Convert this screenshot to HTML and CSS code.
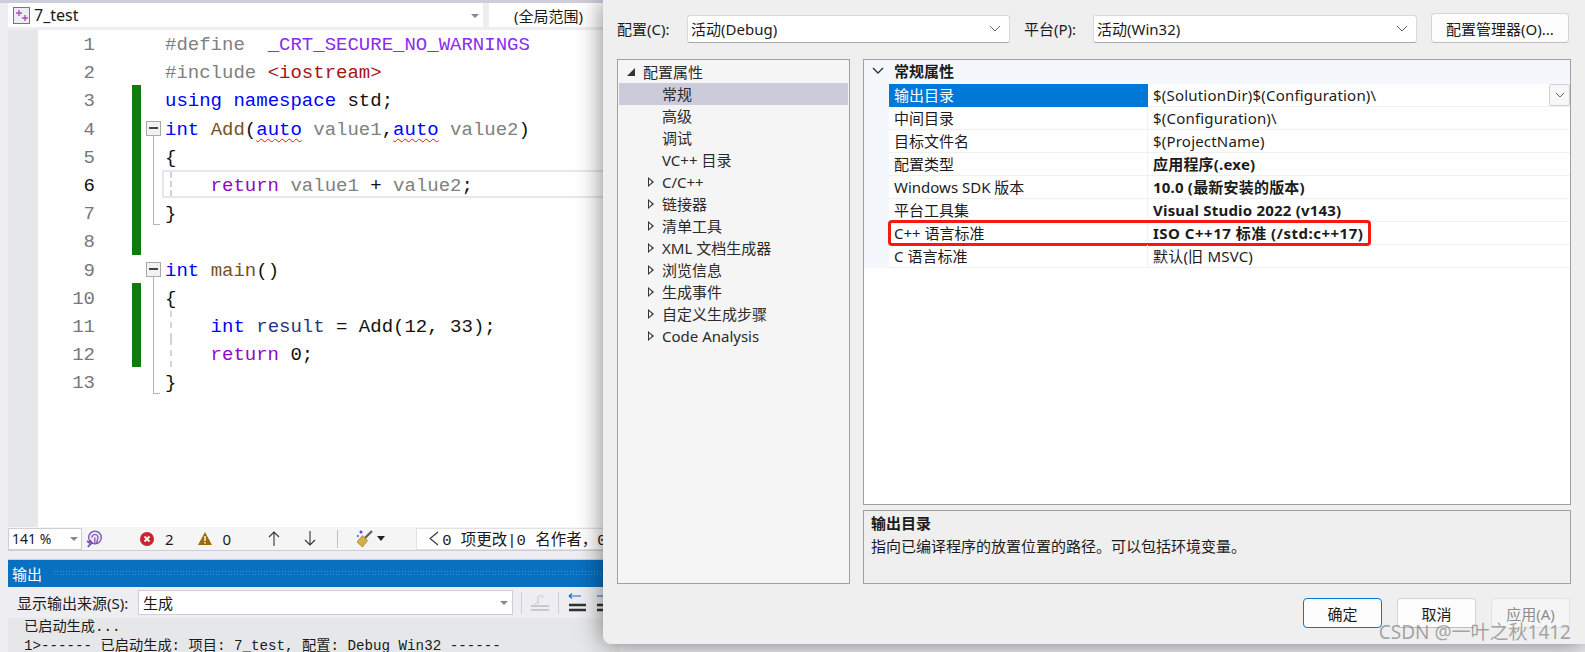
FILE: index.html
```html
<!DOCTYPE html>
<html lang="zh-CN">
<head>
<meta charset="utf-8">
<title>7_test</title>
<link rel="stylesheet" href="styles.css">
</head>
<body>
<main class="ide">
  <div class="nav">
    <div class="combo nav-file">
      <svg class="proj-icon" width="17" height="17" viewBox="0 0 17 17"><rect x=".5" y=".5" width="16" height="16" fill="#eeedf0" stroke="#77757a"/><path d="M3 6h6M6 3v6M9 11h6M12 8v6" stroke="#b24cc0" stroke-width="1.400" fill="none"/></svg>
      <span class="nav-name">7_test</span>
      <i class="tri"></i>
    </div>
    <div class="combo nav-scope">(全局范围)</div>
  </div>
  <div class="editor">
    <div class="gutter"></div>
    <div class="code">
      <div class="line"><span class="num">1</span><span class="chg"></span><span class="fold"></span><span class="txt"><span class="g">#define</span>  <span class="m">_CRT_SECURE_NO_WARNINGS</span></span></div>
      <div class="line"><span class="num">2</span><span class="chg"></span><span class="fold"></span><span class="txt"><span class="g">#include</span> <span class="s">&lt;iostream&gt;</span></span></div>
      <div class="line"><span class="num">3</span><span class="chg on"></span><span class="fold"></span><span class="txt"><span class="k">using</span> <span class="k">namespace</span> std;</span></div>
      <div class="line"><span class="num">4</span><span class="chg on"></span><span class="fold box"></span><span class="txt"><span class="k">int</span> <span class="f">Add</span>(<span class="k err">auto</span> <span class="g">value1</span>,<span class="k err">auto</span> <span class="g">value2</span>)</span></div>
      <div class="line"><span class="num">5</span><span class="chg on"></span><span class="fold bar"></span><span class="txt">{</span></div>
      <div class="line cur"><span class="num now">6</span><span class="chg on"></span><span class="fold bar"></span><span class="txt"><span class="dash"></span>    <span class="p">return</span> <span class="g">value1</span> + <span class="g">value2</span>;</span></div>
      <div class="line"><span class="num">7</span><span class="chg on"></span><span class="fold end"></span><span class="txt">}</span></div>
      <div class="line"><span class="num">8</span><span class="chg on"></span><span class="fold"></span><span class="txt"></span></div>
      <div class="line"><span class="num">9</span><span class="chg"></span><span class="fold box"></span><span class="txt"><span class="k">int</span> <span class="f">main</span>()</span></div>
      <div class="line"><span class="num">10</span><span class="chg on"></span><span class="fold bar"></span><span class="txt">{</span></div>
      <div class="line"><span class="num">11</span><span class="chg on"></span><span class="fold bar"></span><span class="txt"><span class="dash"></span>    <span class="k">int</span> <span class="v">result</span> = Add(12, 33);</span></div>
      <div class="line"><span class="num">12</span><span class="chg on"></span><span class="fold bar"></span><span class="txt"><span class="dash"></span>    <span class="p">return</span> 0;</span></div>
      <div class="line"><span class="num">13</span><span class="chg"></span><span class="fold end"></span><span class="txt">}</span></div>
    </div>
  </div>
  <div class="status">
    <div class="zoom-box"><span>141 %</span><i class="tri"></i></div>
    <svg class="st-icon" width="16" height="18" viewBox="0 0 16 18"><circle cx="9" cy="7.500" r="6.300" fill="#ece6f6" stroke="#7a52b0" stroke-width="1.300"/><path d="M6 7.500a3 3 0 1 1 6 0c0 2-1 3-1.500 6M8.800 7.500v6" fill="none" stroke="#7a52b0" stroke-width="1.200"/><path d="M1 11l2 1.500 1.500-1.500 1.500 2-2 1.500L2 17" fill="none" stroke="#7a52b0" stroke-width="1.800"/></svg>
    <span class="st-item st-err"><svg width="14" height="14" viewBox="0 0 14 14"><circle cx="7" cy="7" r="7" fill="#c8252c"/><path d="M4.500 4.500l5 5M9.500 4.500l-5 5" stroke="#fff" stroke-width="1.800"/></svg>2</span>
    <span class="st-item st-warn"><svg width="14" height="13" viewBox="0 0 14 13"><path d="M7 0l7 13H0z" fill="#9a6a0b"/><path d="M7 4v5M7 10v1.500" stroke="#fff" stroke-width="1.400"/></svg>0</span>
    <svg class="arrow-up" width="12" height="15" viewBox="0 0 12 15"><path d="M6 15V1M1 6l5-5 5 5" fill="none" stroke="#333" stroke-width="1.100"/></svg>
    <svg class="arrow-down" width="12" height="15" viewBox="0 0 12 15"><path d="M6 0v14M1 9l5 5 5-5" fill="none" stroke="#333" stroke-width="1.100"/></svg>
    <span class="st-sep"></span>
    <svg class="broom" width="17" height="18" viewBox="0 0 17 18"><path d="M16 1l-7 7" stroke="#6b6257" stroke-width="2.400"/><path d="M6.500 5.500l5 5-5 6.500L1 12z" fill="#d6ae4c" stroke="#a57f25" stroke-width=".8"/><circle cx="5" cy="2" r="1.500" fill="#3d56c8"/><circle cx="1.800" cy="6" r="1" fill="#3d56c8"/></svg>
    <i class="tri-dark"></i>
    <div class="codelens"><svg width="10" height="15" viewBox="0 0 10 15"><path d="M9 1L1 7.500 9 14" fill="none" stroke="#333" stroke-width="1.100"/></svg><span>0 项更改|0 名作者，0</span></div>
  </div>
  <section class="output">
    <div class="out-title"><span>输出</span><span class="dots"></span></div>
    <div class="out-bar">
      <label>显示输出来源(S):</label>
      <div class="combo out-src"><span>生成</span><i class="tri"></i></div>
      <span class="bar-sep"></span>
      <svg class="bar-icon" width="18" height="18" viewBox="0 0 18 18"><path d="M0 12h18M0 16h18" stroke="#c9c9cc" stroke-width="1.800"/><path d="M7 10V4a2.500 2.500 0 0 1 5 0M4 10l3-2.500" stroke="#c9c9cc" fill="none"/></svg>
      <span class="bar-sep"></span>
      <svg class="bar-icon" width="19" height="19" viewBox="0 0 19 19"><path d="M1 3h12M1 3l3-2.500M1 3l3 2.500" stroke="#1a6fc0" stroke-width="1.200" fill="none"/><path d="M1 12h17M1 17h17" stroke="#333" stroke-width="2.400"/></svg>
      <svg class="bar-icon" width="19" height="19" viewBox="0 0 19 19"><path d="M1 3h12M13 3L10 .5M13 3l-3 2.500" stroke="#1a6fc0" stroke-width="1.200" fill="none"/><path d="M1 12h17M1 17h17" stroke="#333" stroke-width="2.400"/></svg>
    </div>
    <div class="out-text">
      <div>已启动生成...</div>
      <div>1&gt;------ 已启动生成: 项目: 7_test, 配置: Debug Win32 ------</div>
    </div>
  </section>
</main>

<section class="dialog">
  <div class="cfg-row">
    <label class="cfg-label">配置(C):</label>
    <div class="select cfg-sel"><span>活动(Debug)</span><svg width="12" height="7" viewBox="0 0 12 7"><path d="M1 1l5 5 5-5" fill="none" stroke="#666"/></svg></div>
    <label class="plat-label">平台(P):</label>
    <div class="select plat-sel"><span>活动(Win32)</span><svg width="12" height="7" viewBox="0 0 12 7"><path d="M1 1l5 5 5-5" fill="none" stroke="#666"/></svg></div>
    <button class="btn mgr">配置管理器(O)...</button>
  </div>
  <div class="panes">
    <nav class="tree">
      <div class="node root"><i class="open"></i>配置属性</div>
      <div class="node sel">常规</div>
      <div class="node">高级</div>
      <div class="node">调试</div>
      <div class="node">VC++ 目录</div>
      <div class="node"><i class="closed"></i>C/C++</div>
      <div class="node"><i class="closed"></i>链接器</div>
      <div class="node"><i class="closed"></i>清单工具</div>
      <div class="node"><i class="closed"></i>XML 文档生成器</div>
      <div class="node"><i class="closed"></i>浏览信息</div>
      <div class="node"><i class="closed"></i>生成事件</div>
      <div class="node"><i class="closed"></i>自定义生成步骤</div>
      <div class="node"><i class="closed"></i>Code Analysis</div>
    </nav>
    <div class="right">
      <div class="grid">
        <div class="cat"><svg width="12" height="8" viewBox="0 0 12 8"><path d="M1 1l5 5 5-5" fill="none" stroke="#333" stroke-width="1.400"/></svg><b>常规属性</b></div>
        <div class="prop active"><span class="pk">输出目录</span><span class="pv">$(SolutionDir)$(Configuration)\</span><span class="drop"><svg width="10" height="6" viewBox="0 0 10 6"><path d="M1 1l4 4 4-4" fill="none" stroke="#666"/></svg></span></div>
        <div class="prop"><span class="pk">中间目录</span><span class="pv">$(Configuration)\</span></div>
        <div class="prop"><span class="pk">目标文件名</span><span class="pv">$(ProjectName)</span></div>
        <div class="prop"><span class="pk">配置类型</span><span class="pv bold">应用程序(.exe)</span></div>
        <div class="prop"><span class="pk">Windows SDK 版本</span><span class="pv bold">10.0 (最新安装的版本)</span></div>
        <div class="prop"><span class="pk">平台工具集</span><span class="pv bold">Visual Studio 2022 (v143)</span></div>
        <div class="prop marked"><span class="pk">C++ 语言标准</span><span class="pv bold">ISO C++17 标准 (/std:c++17)</span></div>
        <div class="prop"><span class="pk">C 语言标准</span><span class="pv">默认(旧 MSVC)</span></div>
      </div>
      <div class="desc">
        <b>输出目录</b>
        <p>指向已编译程序的放置位置的路径。可以包括环境变量。</p>
      </div>
    </div>
  </div>
  <div class="actions">
    <button class="btn ok">确定</button>
    <button class="btn">取消</button>
    <button class="btn off">应用(A)</button>
  </div>
</section>
<span class="wm">CSDN @一叶之秋1412</span>
</body>
</html>
```

FILE: styles.css
```css
*, *::before, *::after { box-sizing: border-box; }
html, body { margin: 0; height: 652px; overflow: hidden; }
body {
  position: relative;
  width: 1585px;
  background: #eeeef2;
  font-family: "Noto Sans", "Noto Sans CJK SC", sans-serif;
  color: #1a1a1a;
}
i { display: block; font-style: normal; }

/* IDE behind the dialog */
.ide { width: 620px; height: 652px; padding-left: 8px; display: flex; flex-direction: column; border-top: 3px solid #cccedb; overflow: hidden; }
.nav { display: flex; gap: 6px; height: 24px; flex: none; }
.combo { background: #fff; display: flex; align-items: center; position: relative; }
.nav-file { width: 475px; padding-left: 5px; }
.proj-icon { margin-right: 4px; flex: none; }
.nav-name { font-size: 16px; }
.nav-file .tri { position: absolute; right: 4px; top: 11px; }
.nav-scope { width: 130px; padding-left: 25px; font-size: 15px; white-space: nowrap; }
.tri { width: 0; height: 0; border-left: 4px solid transparent; border-right: 4px solid transparent; border-top: 4px solid #888; }

.editor { height: 497px; margin-top: 3px; display: flex; flex: none; background: #fff; }
.gutter { width: 30px; background: #e6e7e8; flex: none; }
.code { flex: 1; margin-top: -1px; font: 19px/28.2px "Liberation Mono", monospace; }
.line { display: flex; height: 28.2px; position: relative; }
.num { width: 57px; padding-top: 2px; text-align: right; color: #77787a; flex: none; }
.num.now { color: #111; }
.chg { width: 9px; margin-left: 37px; flex: none; }
.chg.on { background: #107c10; }
.fold { width: 15px; margin-left: 5px; flex: none; position: relative; }
.fold.bar::before, .fold.end::before { content: ""; position: absolute; left: 7px; top: 0; bottom: 0; width: 1px; background: #b4b4b4; }
.fold.end::before { bottom: 1px; }
.fold.end::after { content: ""; position: absolute; left: 7px; bottom: 1px; width: 7px; height: 1px; background: #b4b4b4; }
.fold.box { background: linear-gradient(#b4b4b4, #b4b4b4) 7px 22px / 1px 100% no-repeat; }
.fold.box::before { content: ""; position: absolute; left: 0; top: 7px; width: 15px; height: 15px; border: 1px solid #a9a9a9; background: #f2f2f2; }
.fold.box::after { content: ""; position: absolute; left: 3px; top: 13px; width: 9px; height: 2px; background: #444; }
.txt { padding: 2px 0 0 4px; flex: 1; position: relative; color: #111; white-space: pre; }
.dash { position: absolute; left: 9px; top: 0; bottom: 0; border-left: 2px dashed #d3d3d3; }
.line.cur .txt { border: 2px solid #e6e6f0; border-right: 0; margin-left: 1px; padding: 0 0 0 1px; }
.line.cur .dash { left: 6px; }
.g { color: #808080; }
.m { color: #8a2df0; }
.s { color: #a31515; }
.k { color: #0000ff; }
.f { color: #74531f; }
.p { color: #8f08c4; }
.v { color: #1f377f; }
.err { text-decoration: underline wavy #e51400 1px; text-underline-offset: 3px; }

.status { height: 24px; display: flex; align-items: center; flex: none; background: #f5f5f5; border-bottom: 1px solid #ccced8; font-size: 15px; }
.zoom-box { width: 74px; height: 22px; flex: none; background: #fff; border: 1px solid #ccced8; display: flex; align-items: center; justify-content: space-between; padding: 0 3px; font-size: 14px; }
.st-icon { margin-left: 4px; flex: none; }
.st-item { display: flex; align-items: center; gap: 11px; flex: none; }
.st-err { margin-left: 38px; }
.st-warn { margin-left: 24px; }
.arrow-up { margin-left: 37px; flex: none; }
.arrow-down { margin-left: 24px; flex: none; }
.st-sep { width: 1px; height: 18px; background: #c0c0c0; margin-left: 21px; flex: none; }
.broom { margin-left: 18px; flex: none; }
.tri-dark { width: 0; height: 0; border-left: 4px solid transparent; border-right: 4px solid transparent; border-top: 5px solid #222; margin-left: 4px; flex: none; }
.codelens { margin-left: 31px; width: 210px; height: 22px; background: #fff; display: flex; align-items: center; gap: 3px; padding-left: 12px; font: 15.5px "Liberation Mono", "Noto Sans CJK SC", monospace; white-space: pre; overflow: hidden; flex: none; border: 1px solid #e2e2e6; }

.output { margin-top: 8px; flex: 1; border-top: 1px solid #ccced8; display: flex; flex-direction: column; min-height: 0; }
.out-title { height: 27px; background: #0870c0; color: #fff; font-size: 15px; display: flex; align-items: center; padding-left: 4px; gap: 11px; flex: none; }
.dots { flex: 1; height: 7px; background: radial-gradient(circle, #3f93d2 1px, transparent 1px) 0 0 / 3px 3px; }
.out-bar { height: 31px; display: flex; align-items: center; padding-left: 9px; flex: none; font-size: 15px; }
.out-bar label { width: 121px; flex: none; white-space: nowrap; }
.out-src { width: 375px; height: 25px; flex: none; border: 1px solid #ccced8; padding: 0 4px; font-size: 15px; justify-content: space-between; margin-right: 8px; }
.bar-sep { width: 1px; height: 22px; background: #ccced8; margin-right: 9px; flex: none; }
.bar-icon { margin-right: 9px; flex: none; }
.out-text { flex: 1; min-height: 0; background: #e6e7e8; font: 14.2px/19px "Liberation Mono", "Noto Sans CJK SC", monospace; padding-left: 16px; overflow: hidden; }
.out-text div { white-space: pre; }

/* Property dialog: a window floating above the IDE */
.dialog {
  position: absolute; left: 603px; top: 0; width: 982px; height: 644px;
  background: #efefef; border-radius: 0 0 0 8px;
  box-shadow: 0 0 26px rgba(0,0,0,.5);
  font-size: 15px; color: #1b1b1b;
  padding: 13px 15px 0 14px;
  display: flex; flex-direction: column;
}
.cfg-row { display: flex; align-items: center; height: 30px; flex: none; }
.cfg-label { width: 70px; flex: none; white-space: nowrap; }
.select { height: 28px; flex: none; background: #fff; border: 1px solid #d8d8d8; border-bottom-color: #a8a8a8; border-radius: 3px; display: flex; align-items: center; justify-content: space-between; padding: 0 8px 0 3px; margin-top: 1px; }
.cfg-sel { width: 323px; }
.plat-label { width: 69px; margin-left: 14px; flex: none; white-space: nowrap; }
.plat-sel { width: 324px; }
.btn { font: inherit; color: #1b1b1b; background: #fdfdfd; border: 1px solid #d4d4d4; border-bottom-color: #bdbdbd; border-radius: 4px; width: 79px; height: 30px; padding: 0; flex: none; }
.mgr { width: 138px; margin-left: 14px; }

.panes { display: flex; gap: 13px; margin-top: 16px; height: 525px; flex: none; }
.tree { width: 233px; flex: none; background: #f5f5f5; border: 1px solid #a0a0a0; padding: 1px; }
.node { height: 22px; line-height: 22px; padding-left: 43px; position: relative; white-space: nowrap; color: #2a2a2a; }
.node.root { padding-left: 24px; }
.node.sel { background: #cbcbd9; }
.open { position: absolute; left: 8px; top: 7px; width: 0; height: 0; border-left: 8px solid transparent; border-bottom: 8px solid #333; }
.closed { position: absolute; left: 29px; top: 6px; width: 6px; height: 10px; }
.closed::before { content: ""; position: absolute; inset: 0; background: #333; clip-path: polygon(0 0, 100% 50%, 0 100%); }
.closed::after { content: ""; position: absolute; left: 1px; top: 2px; width: 3px; height: 6px; background: #f5f5f5; clip-path: polygon(0 0, 100% 50%, 0 100%); }

.right { width: 708px; flex: none; display: flex; flex-direction: column; gap: 5px; }
.grid { height: 446px; background: #fff; border: 1px solid #a0a0a0; flex: none; }
.cat { height: 24px; background: #f4f7fc; display: flex; align-items: center; padding: 0 0 3px 8px; }
.cat svg { margin-right: 10px; }
.prop { height: 23px; display: flex; align-items: center; background: linear-gradient(to right, #f4f7fc 25px, transparent 25px); position: relative; }
.pk { width: 259px; margin-left: 25px; flex: none; height: 100%; padding-left: 5px; line-height: 22px; border-bottom: 1px solid #f0f0f0; border-right: 1px solid #f0f0f0; white-space: nowrap; }
.pv { flex: 1; height: 100%; padding-left: 5px; line-height: 22px; border-bottom: 1px solid #f0f0f0; white-space: nowrap; letter-spacing: .2px; }
.bold { font-weight: 700; }
.marked .pv { letter-spacing: .5px; }
.active .pk { background: #0078d7; color: #fff; border: 0; }
.drop { position: absolute; right: 0; top: 0; width: 21px; height: 22px; background: #f7f7f7; border: 1px solid #d0d0d0; border-radius: 2px; display: flex; align-items: center; justify-content: center; }
.marked::after { content: ""; position: absolute; left: 24px; top: -2px; width: 483px; height: 26px; border: 3px solid #f41a10; border-radius: 4px; pointer-events: none; }
.desc { flex: 1; background: #efefef; border: 1px solid #a0a0a0; padding: 2px 7px; }
.desc b { display: block; line-height: 20px; }
.desc p { margin: 3px 0 0; line-height: 20px; }

.actions { display: flex; justify-content: flex-end; gap: 15px; margin-top: 14px; }
.btn.ok { border: 1px solid #0078d7; }
.btn.off { color: #8c8c8c; background: #f5f5f5; border-color: #e2e2e2; }

.wm { position: absolute; right: 14px; top: 617px; font-size: 19px; color: rgba(110,110,110,.6); white-space: nowrap; }
```
